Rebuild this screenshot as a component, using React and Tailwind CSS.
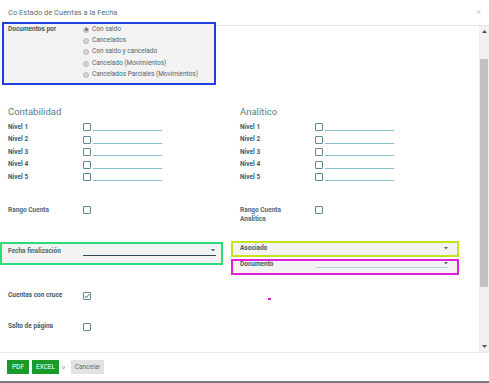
import React from 'react';

const labelCls = 'text-[6.5px] font-bold text-[#3f5d67] leading-[9px]';

const Checkbox = ({ checked }) => (
  <div className="w-[8px] h-[8px] border-[1.3px] border-[#5f8791] rounded-[1px] bg-white flex items-center justify-center shrink-0">
    {checked && (
      <svg width="6" height="6" viewBox="0 0 6 6">
        <polyline points="0.8,3.2 2.4,4.6 5.2,1.2" fill="none" stroke="#3f5d67" strokeWidth="1" />
      </svg>
    )}
  </div>
);

const Radio = ({ checked }) => (
  <div className="w-[6px] h-[6px] rounded-full bg-[#d4d4d4] border-[0.5px] border-[#bababa] flex items-center justify-center shrink-0">
    {checked && <div className="w-[3px] h-[3px] rounded-full bg-[#6f6f6f]" />}
  </div>
);

const Caret = () => (
  <svg width="4" height="3" viewBox="0 0 4 3" className="shrink-0">
    <polygon points="0,0 4,0 2,2.5" fill="#4f6b74" />
  </svg>
);

const NivelColumn = ({ title, labelWidth, pad }) => (
  <div className="flex flex-col">
    <div className={`${pad} text-[9.5px] leading-[12px] text-[#5a7c86]`}>{title}</div>
    <div className="flex flex-col mt-[3px]">
      {[1, 2, 3, 4, 5].map((n) => (
        <div key={n} className="flex items-center h-[12.5px]">
          <div className={`${labelWidth} ${pad} ${labelCls}`}>Nivel {n}</div>
          <div className="flex items-end">
            <Checkbox />
            <div className="ml-[2px] w-[69px] h-px bg-[#86c1cf]" />
          </div>
        </div>
      ))}
    </div>
  </div>
);

export default function App() {
  const opciones = [
    'Con saldo',
    'Cancelados',
    'Con saldo y cancelado',
    'Cancelado (Movimientos)',
    'Cancelados Parciales (Movimientos)',
  ];

  return (
    <div className="w-[489px] h-[383px] bg-white flex flex-col overflow-hidden" style={{ fontFamily: 'Roboto, "Liberation Sans", sans-serif' }}>
      {/* Header */}
      <div className="h-[26px] shrink-0 border-b border-[#e6e6e6] flex items-center justify-between pl-[8px] pr-[8px]">
        <span className="text-[7.5px] text-[#5b6f76]">Co Estado de Cuentas a la Fecha</span>
        <span className="text-[9px] text-[#c8c8c8] leading-none">×</span>
      </div>

      {/* Body */}
      <div className="flex flex-1 min-h-0">
        <div className="relative flex-1 flex flex-col">
          {/* Documentos por */}
          <div className="-mt-[4px] ml-[2px] w-[214px] h-[63px] border-2 border-[#1f3fe0] bg-[#f3f3f3] flex pl-[4px]">
            <div className={`w-[75px] ${labelCls} leading-[11.3px]`}>Documentos por</div>
            <div className="flex flex-col">
              {opciones.map((o, i) => (
                <div key={o} className="flex items-center gap-[3px] h-[11.3px]">
                  <Radio checked={i === 0} />
                  <span className="text-[6.5px] text-[#4d6670]">{o}</span>
                </div>
              ))}
            </div>
          </div>

          {/* Niveles */}
          <div className="flex mt-[21px]">
            <div className="w-[231px]">
              <NivelColumn title="Contabilidad" labelWidth="w-[83px]" pad="pl-[8px]" />
            </div>
            <div className="flex-1">
              <NivelColumn title="Analítico" labelWidth="w-[84px]" pad="pl-[9px]" />
            </div>
          </div>

          {/* Rango */}
          <div className="flex mt-[22px] h-[18px]">
            <div className="w-[231px] flex items-start">
              <div className={`w-[83px] pl-[8px] ${labelCls} text-[#4f6b74]`}>Rango Cuenta</div>
              <div className="mt-[0.5px]"><Checkbox /></div>
            </div>
            <div className="flex items-start">
              <div className={`w-[84px] pl-[9px] ${labelCls} text-[#4f6b74]`}>Rango Cuenta<br />Analítica</div>
              <div className="mt-[0.5px]"><Checkbox /></div>
            </div>
          </div>

          {/* Selects */}
          <div className="flex mt-[17px]">
            <div className="w-[231px]">
              <div className="mt-[1px] w-[223px] h-[23px] border-2 border-[#2bdc78] bg-[#f3f3f3] flex items-start pl-[6px] pr-[5px] pt-[3px]">
                <div className={`w-[75px] ${labelCls} text-[#4f6b74]`}>Fecha finalización</div>
                <div className="flex-1 flex flex-col">
                  <div className="flex justify-end pt-[2px] pr-[1px]"><Caret /></div>
                  <div className="mt-[3px] h-[1.5px] bg-[#2c4a5a]" />
                </div>
              </div>
            </div>
            <div className="flex flex-col">
              <div className="w-[228px] h-[16px] border-2 border-[#c8e01e] bg-[#f3f3f3] flex items-center justify-between pl-[7px] pr-[9px]">
                <span className={labelCls}>Asociado</span>
                <Caret />
              </div>
              <div className="mt-[2px] w-[228px] h-[16px] border-2 border-[#e020d8] bg-[#f3f3f3] flex pl-[7px] pr-[9px]">
                <div className={`w-[76px] ${labelCls} mt-[-1px]`}>Documento</div>
                <div className="flex-1 flex flex-col">
                  <div className="flex justify-end pt-[1px]"><Caret /></div>
                  <div className="mt-[2px] h-[1.5px] bg-[#b9d4dc]" />
                </div>
              </div>
            </div>
          </div>

          <div className="absolute left-[268px] top-[272px] w-[3px] h-[2px] bg-[#e020d8]" />

          {/* Cuentas con cruce */}
          <div className="flex items-center h-[12px] mt-[15px]">
            <div className={`w-[83px] pl-[8px] ${labelCls}`}>Cuentas con cruce</div>
            <Checkbox checked />
          </div>

          {/* Salto de página */}
          <div className="flex items-center h-[12px] mt-[19px]">
            <div className={`w-[83px] pl-[8px] ${labelCls}`}>Salto de página</div>
            <Checkbox />
          </div>
        </div>

        {/* Scrollbar */}
        <div className="w-[10px] bg-[#f1f1f1] flex flex-col items-center">
          <div className="h-[9px] flex items-center justify-center mt-[1px]">
            <svg width="5" height="3" viewBox="0 0 5 3"><polygon points="0,3 5,3 2.5,0" fill="#505050" /></svg>
          </div>
          <div className="mt-[23px] w-[8px] h-[228px] bg-[#c1c1c1]" />
          <div className="flex-1" />
          <div className="h-[9px] flex items-center justify-center mb-[1px]">
            <svg width="5" height="3" viewBox="0 0 5 3"><polygon points="0,0 5,0 2.5,3" fill="#505050" /></svg>
          </div>
        </div>
      </div>

      {/* Footer */}
      <div className="h-[29px] shrink-0 border-t border-[#ececec] flex items-center pl-[7px] gap-[3px]">
        <button className="w-[22px] h-[14px] bg-[#1a9a2a] text-white text-[6.5px] leading-none">PDF</button>
        <button className="w-[27px] h-[14px] bg-[#1a9a2a] text-white text-[6.5px] leading-none">EXCEL</button>
        <div className="w-[3px] h-[3px] rounded-full border-[0.5px] border-[#8aa] ml-[0px]" />
        <button className="ml-[3px] w-[33px] h-[14px] bg-[#e2e2e2] text-[#56707a] text-[6.5px] leading-none">Cancelar</button>
      </div>
      <div className="h-[2px] shrink-0 bg-[#7a7a7a]" />
    </div>
  );
}
